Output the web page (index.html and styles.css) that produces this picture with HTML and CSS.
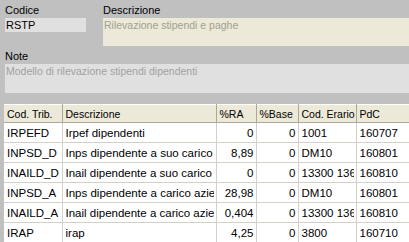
FILE: index.html
```html
<!DOCTYPE html>
<html>
<head>
<meta charset="utf-8">
<link rel="stylesheet" href="styles.css">
</head>
<body>
<div class="form">
  <div class="top">
    <div class="col-code">
      <div class="label">Codice</div>
      <div class="field code">RSTP</div>
    </div>
    <div class="col-desc">
      <div class="label">Descrizione</div>
      <div class="field desc">Rilevazione stipendi e paghe</div>
    </div>
  </div>
  <div class="note-block">
    <div class="label">Note</div>
    <div class="field note">Modello di rilevazione stipendi dipendenti</div>
  </div>
</div>
<div class="grid-wrap">
  <table class="grid">
    <colgroup>
      <col class="c1"><col class="c2"><col class="c3"><col class="c4"><col class="c5"><col class="c6">
    </colgroup>
    <thead>
      <tr><th>Cod. Trib.</th><th>Descrizione</th><th>%RA</th><th>%Base</th><th>Cod. Erario</th><th>PdC</th></tr>
    </thead>
    <tbody>
      <tr><td>IRPEFD</td><td>Irpef dipendenti</td><td class="num">0</td><td class="num">0</td><td>1001</td><td>160707</td></tr>
      <tr><td>INPSD_D</td><td>Inps dipendente a suo carico</td><td class="num">8,89</td><td class="num">0</td><td>DM10</td><td>160801</td></tr>
      <tr><td>INAILD_D</td><td>Inail dipendente a suo carico</td><td class="num">0</td><td class="num">0</td><td><span class="clip">13300 13634</span></td><td>160810</td></tr>
      <tr><td>INPSD_A</td><td><span class="clip">Inps dipendente a carico azienda</span></td><td class="num">28,98</td><td class="num">0</td><td>DM10</td><td>160801</td></tr>
      <tr><td>INAILD_A</td><td><span class="clip">Inail dipendente a carico azienda</span></td><td class="num">0,404</td><td class="num">0</td><td><span class="clip">13300 13634</span></td><td>160810</td></tr>
      <tr><td>IRAP</td><td>irap</td><td class="num">4,25</td><td class="num">0</td><td>3800</td><td>160710</td></tr>
      <tr><td></td><td></td><td class="num"></td><td class="num"></td><td></td><td></td></tr>
    </tbody>
  </table>
</div>
</body>
</html>
```
FILE: styles.css
```css
html, body {
  margin: 0;
  padding: 0;
  background: #c0c0c0;
  width: 409px;
  height: 242px;
  overflow: hidden;
  font-family: "Liberation Sans", Arial, sans-serif;
}
.form {
  padding: 2px 0 0 5px;
}
.top {
  display: flex;
  gap: 17px;
}
.col-code {
  width: 81px;
}
.col-desc {
  flex: 1;
}
.label {
  height: 16px;
  line-height: 16px;
  font-size: 11px;
  color: #000;
}
.field {
  font-size: 10.5px;
  line-height: 14px;
  padding-left: 1px;
  white-space: nowrap;
  overflow: hidden;
}
.code {
  height: 14px;
  background: #e0e0e0;
  color: #000;
  font-size: 11px;
}
.desc {
  height: 28px;
  background: #ece9d8;
  color: #a0a090;
}
.note-block {
  margin-top: 2px;
}
.note {
  height: 29px;
  background: #e0e0e0;
  color: #a0a0a0;
}
.grid-wrap {
  margin-top: 11px;
  padding-left: 4px;
  overflow: hidden;
}
.grid {
  table-layout: fixed;
  border-collapse: collapse;
  width: 420px;
  font-size: 11.5px;
  background: #fff;
}
.c1 { width: 58px; }
.c2 { width: 154px; }
.c3 { width: 40px; }
.c4 { width: 42px; }
.c5 { width: 58px; }
.c6 { width: 68px; }
.grid th, .grid td {
  white-space: nowrap;
  overflow: hidden;
  text-overflow: clip;
  padding: 0 2px 0 3px;
  text-align: left;
  font-weight: normal;
  color: #000;
}
.grid th {
  height: 17px;
  font-size: 10.5px;
  padding: 0 1px 0 3px;
  background: #ece9d8;
  border-right: 1px solid #aca899;
  border-bottom: 1px solid #aca899;
  border-top: 1px solid #fff;
}
.grid td {
  height: 19px;
  border-right: 1px solid #d4d0c8;
  border-bottom: 1px solid #d4d0c8;
}
.grid td.num {
  text-align: right;
}
.clip {
  display: block;
  overflow: hidden;
  white-space: nowrap;
}
```
